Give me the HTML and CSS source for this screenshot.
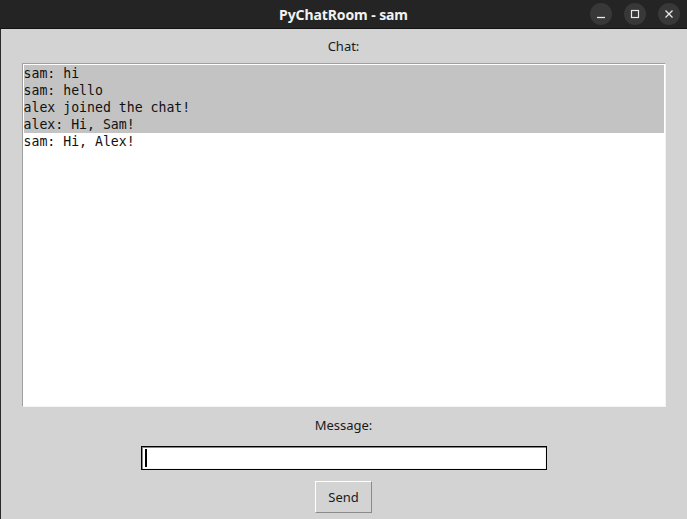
FILE: index.html
```html
<!DOCTYPE html>
<html>
<head>
<meta charset="utf-8">
<link rel="stylesheet" href="styles.css">
</head>
<body>
<div class="window">
  <header class="titlebar">
    <div class="title">PyChatRoom - sam</div>
    <div class="controls">
      <span class="ctl"><svg width="22" height="22" viewBox="0 0 22 22"><path d="M7 14.5h8" stroke="#e8e8e8" stroke-width="1.3"/></svg></span>
      <span class="ctl"><svg width="22" height="22" viewBox="0 0 22 22"><rect x="7.5" y="7.5" width="7" height="7" fill="none" stroke="#e8e8e8" stroke-width="1.2"/></svg></span>
      <span class="ctl"><svg width="22" height="22" viewBox="0 0 22 22"><path d="M7.5 7.5l7 7M14.5 7.5l-7 7" stroke="#e8e8e8" stroke-width="1.3"/></svg></span>
    </div>
  </header>
  <main class="content">
    <div class="label label-chat">Chat:</div>
    <div class="chatbox">
      <div class="line sel">sam: hi</div>
      <div class="line sel">sam: hello</div>
      <div class="line sel">alex joined the chat!</div>
      <div class="line sel">alex: Hi, Sam!</div>
      <div class="line">sam: Hi, Alex!</div>
    </div>
    <div class="label label-msg">Message:</div>
    <div class="entry"><span class="cursor"></span></div>
    <div class="button">Send</div>
  </main>
</div>
</body>
</html>
```
FILE: styles.css
```css
html, body {
  margin: 0;
  padding: 0;
  background: #d3d3d3;
}
.window {
  width: 687px;
  height: 519px;
  overflow: hidden;
  display: flex;
  flex-direction: column;
}
.titlebar {
  height: 28px;
  background: #242424;
  border-bottom: 1px solid #121212;
  position: relative;
  display: flex;
  align-items: center;
  justify-content: center;
  flex-shrink: 0;
}
.title {
  color: #f2f2f2;
  font-family: "Noto Sans", "DejaVu Sans", sans-serif;
  font-weight: bold;
  font-size: 14px;
  letter-spacing: -0.1px;
}
.controls {
  position: absolute;
  right: 7px;
  top: 3px;
  display: flex;
  gap: 12px;
}
.ctl {
  width: 22px;
  height: 22px;
  border-radius: 50%;
  background: #383838;
  display: block;
}
.ctl svg { display: block; }
.content {
  flex: 1;
  background: #d3d3d3;
  border-left: 1px solid #2a2a2a;
  display: flex;
  flex-direction: column;
  align-items: center;
}
.label {
  font-family: "Noto Sans", "DejaVu Sans", sans-serif;
  font-size: 13px;
  color: #1a1a1a;
  line-height: 18px;
}
.label-chat {
  margin-top: 8px;
  margin-left: -1px;
}
.chatbox {
  margin-top: 8px;
  margin-left: -1px;
  width: 640px;
  height: 340px;
  background: #ffffff;
  border-top: 1px solid #a0a0a0;
  border-left: 1px solid #a0a0a0;
  border-right: 1px solid #f4f4f4;
  border-bottom: 1px solid #f4f4f4;
  padding: 1px;
  box-sizing: content-box;
}
.line {
  font-family: "DejaVu Sans Mono", monospace;
  font-size: 13.2px;
  line-height: 17px;
  height: 17px;
  color: #111;
  white-space: pre;
}
.line.sel {
  background: #c3c3c3;
}
.label-msg {
  margin-top: 9px;
  margin-left: -1px;
}
.entry {
  margin-top: 12px;
  margin-left: -1px;
  width: 402px;
  height: 20px;
  background: #fff;
  border: 1px solid #000;
  outline: 1px solid #d3d3d3;
  box-shadow: inset 1px 1px 0 #888, inset -1px -1px 0 #f4f4f4;
  padding: 1px;
  display: flex;
  align-items: center;
}
.cursor {
  width: 2px;
  height: 18px;
  background: #000;
  margin-left: 2px;
}
.button {
  margin-top: 11px;
  margin-left: -1px;
  width: 55px;
  height: 30px;
  background: #d3d3d3;
  border-top: 1px solid #ffffff;
  border-left: 1px solid #ffffff;
  border-right: 1px solid #8a8a8a;
  border-bottom: 1px solid #8a8a8a;
  font-family: "Noto Sans", "DejaVu Sans", sans-serif;
  font-size: 13px;
  color: #1a1a1a;
  display: flex;
  align-items: center;
  justify-content: center;
}
```
